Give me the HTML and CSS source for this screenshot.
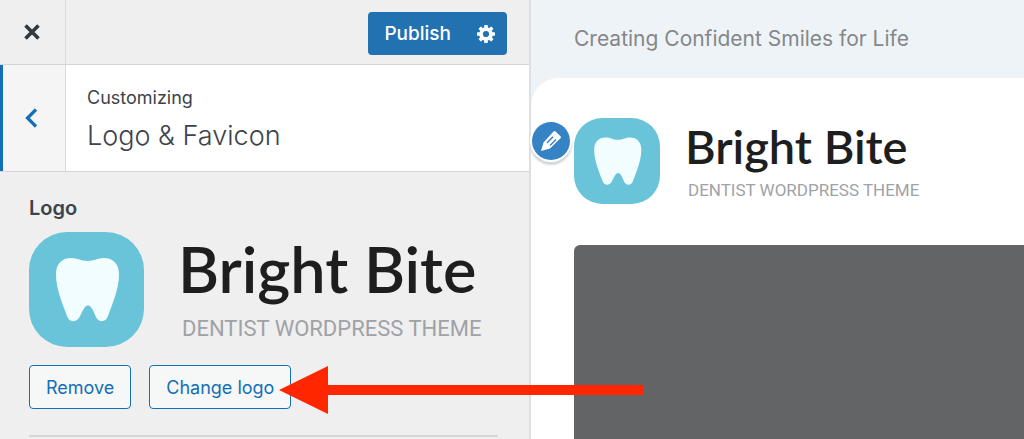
FILE: index.html
```
<!DOCTYPE html>
<html lang="en">
<head>
<meta charset="utf-8">
<meta name="viewport" content="width=device-width, initial-scale=1">
<title>Customizing: Logo &amp; Favicon</title>
<link rel="stylesheet" href="styles.css">
</head>
<body>
<svg class="defs" aria-hidden="true">
  <symbol id="tooth" viewBox="0 0 115 115">
    <rect width="115" height="115" rx="38" fill="#69c4d9"/>
    <path fill="#f2fdff" d="M58.500 29C66 29 68 26 75 26C84 26 90 32 90 42C90 57 84 70 79 84C77 90.500 70 90.500 67.500 86C65 81 63 73.500 59 73.500C55 73.500 53 81 50 86C47 90.500 40 90.500 38 84C33 70 27 57 27 42C27 32 33 26 42 26C49 26 51 29 58.500 29Z"/>
  </symbol>
</svg>
<div class="customizer">
  <aside class="controls">
    <header class="bar">
      <button class="close" type="button" aria-label="Close">
        <svg width="16" height="16" viewBox="0 0 16 16"><path d="M1.500 1.500L14.500 14.500M14.500 1.500L1.500 14.500" stroke="#32373c" stroke-width="3.600"/></svg>
      </button>
      <div class="actions">
        <button class="publish" type="button">Publish</button>
        <button class="settings" type="button" aria-label="Publish settings">
          <svg width="18" height="18" viewBox="0 0 18 18"><g fill="#fff"><rect x="7.200" width="3.600" height="18" rx=".6"/><rect x="7.200" width="3.600" height="18" rx=".6" transform="rotate(45 9 9)"/><rect x="7.200" width="3.600" height="18" rx=".6" transform="rotate(90 9 9)"/><rect x="7.200" width="3.600" height="18" rx=".6" transform="rotate(135 9 9)"/><circle cx="9" cy="9" r="6.800"/></g><circle cx="9" cy="9" r="3.100" fill="#2271b1"/></svg>
        </button>
      </div>
    </header>
    <div class="section">
      <button class="back" type="button" aria-label="Back">
        <svg width="13" height="20" viewBox="0 0 13 20"><path d="M11 1.500L2.500 10L11 18.500" fill="none" stroke="#136fb9" stroke-width="3.200"/></svg>
      </button>
      <h1 class="heading"><span class="eyebrow">Customizing</span>Logo &amp; Favicon</h1>
    </div>
    <div class="panel">
      <h2 class="label">Logo</h2>
      <div class="brand brand-large">
        <svg class="mark" aria-hidden="true"><use href="#tooth"/></svg>
        <div class="words"><span class="name">Bright Bite</span><span class="tagline">DENTIST WORDPRESS THEME</span></div>
      </div>
      <div class="buttons">
        <button class="outline" type="button">Remove</button>
        <button class="outline" type="button">Change logo</button>
      </div>
      <hr class="rule">
    </div>
  </aside>
  <main class="preview">
    <p class="slogan">Creating Confident Smiles for Life</p>
    <div class="page">
      <div class="brand brand-small">
        <button class="edit" type="button" aria-label="Edit logo">
          <svg width="22" height="22" viewBox="0 0 22 22"><path fill="#fff" d="M1 21L3.500 12.500L13.500 1.500Q14.500 .5 15.500 1.500L20.500 6.200Q21.500 7.200 20.500 8.200L10 18.500Z"/><path d="M7 13L13 6.700M10 15.500L16 9.500" stroke="#3582c4" stroke-width="1.400"/></svg>
        </button>
        <svg class="mark" aria-hidden="true"><use href="#tooth"/></svg>
        <div class="words"><span class="name">Bright Bite</span><span class="tagline">DENTIST WORDPRESS THEME</span></div>
      </div>
      <div class="hero"></div>
    </div>
  </main>
  <svg class="arrow" width="366" height="50" viewBox="0 0 366 50" aria-hidden="true"><path fill="#ff2600" d="M0 25L49 1V20H365V30H49V49Z"/></svg>
</div>
</body>
</html>
```
FILE: styles.css
```
* { box-sizing: border-box; }
body { margin: 0; font-family: Inter, "Liberation Sans", sans-serif; color: #3c434a; }
button { font: inherit; margin: 0; padding: 0; border: 0; cursor: pointer; }
h1, h2, p { margin: 0; font-weight: 400; }
svg { display: block; flex: none; }
.defs { position: absolute; width: 0; height: 0; }

.customizer {
  position: relative;
  display: grid;
  grid-template-columns: minmax(0, 531fr) minmax(0, 493fr);
  min-height: 100vh;
  overflow: hidden;
}
.controls { background: #efefef; border-right: 2px solid #dcdfe4; }
.bar { display: flex; justify-content: space-between; height: 65px; border-bottom: 1px solid #d2d4d6; }
.close {
  display: grid; place-items: center;
  width: 66px; padding-right: 2px; background: #efefef; border-right: 1px solid #d8dce1;
}
.actions { display: flex; margin: 12px 22px 9px 0; border-radius: 4px; overflow: hidden; }
.publish, .settings { background: #2271b1; color: #fff; }
.publish { padding: 0 14px 0 16px; font-size: 19px; font-weight: 500; }
.settings { display: grid; place-items: center; width: 42px; }

.section { display: flex; height: 107px; background: #fff; border-bottom: 1px solid #d2d4d6; }
.back {
  display: grid; place-items: center;
  width: 66px; padding-right: 6px; background: #f5f5f5;
  border-left: 3px solid #136fb9; border-right: 1px solid #d8dce1;
}
.heading { padding: 20px 21px; font-size: 27px; font-weight: 300; line-height: 50px; }
.eyebrow { display: block; font-size: 18px; font-weight: 400; line-height: 26px; }

.panel { padding: 23px 31px 0 29px; }
.label { font-size: 20px; font-weight: 600; line-height: 26px; }
.brand { position: relative; display: flex; align-items: flex-start; }
.words { display: flex; flex-direction: column; white-space: nowrap; }
.name { font-family: Lato, sans-serif; font-weight: 600; color: #1e1e1e; }
.tagline { font-family: Roboto, sans-serif; color: #9fa2a6; }
.brand-large { gap: 34px; margin-top: 11px; }
.brand-large .mark { width: 115px; height: 115px; }
.brand-large .name { font-size: 63px; line-height: 74px; }
.brand-large .tagline { font-size: 22px; line-height: 46px; padding-left: 4px; }
.buttons { display: flex; gap: 18px; margin-top: 13px; }
.outline {
  height: 44px; padding: 0 16px;
  border: 1px solid #136fb9; border-radius: 4px;
  background: #f6f7f7; color: #136fb9; font-size: 18px;
}
.rule { margin: 26px 0 0; border: 0; border-top: 2px solid #d6d6d6; }

.preview { display: flex; flex-direction: column; background: #eef3f7; }
.slogan { padding: 22px 0 22px 43px; font-size: 21px; line-height: 34px; color: #858789; white-space: nowrap; }
.page { flex: 1; display: flex; flex-direction: column; padding: 40px 0 0 43px; background: #fff; border-top-left-radius: 28px; }
.brand-small { gap: 25px; }
.brand-small .mark { width: 86px; height: 86px; }
.brand-small .name { font-size: 47px; line-height: 56px; }
.brand-small .tagline { font-size: 17px; line-height: 32px; padding-left: 3px; }
.edit {
  position: absolute; top: 4px; left: -42px;
  display: grid; place-items: center;
  width: 38px; height: 38px; border-radius: 50%;
  background: #3582c4; box-shadow: 0 0 0 2px #fff, 0 3px 2px 2px #d3d6d9;
}
.hero { flex: 1; margin-top: 39px; background: #636466; border-top-left-radius: 6px; }
.arrow { position: absolute; left: 279px; top: 365px; }
```
